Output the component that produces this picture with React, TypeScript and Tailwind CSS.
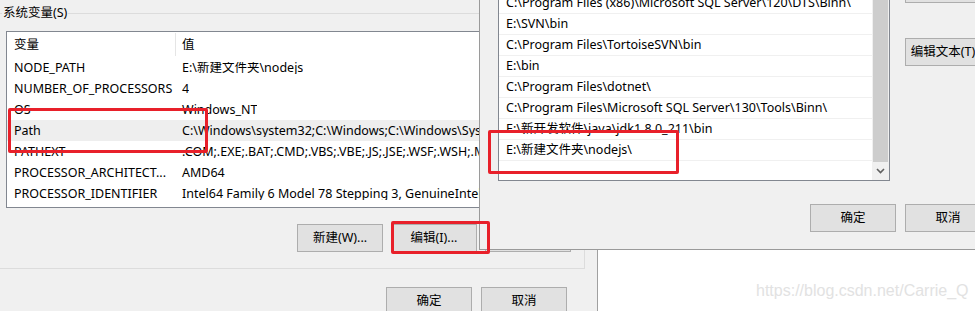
const SYS_VARS = [
  { name: "NODE_PATH", value: "E:\\新建文件夹\\nodejs" },
  { name: "NUMBER_OF_PROCESSORS", value: "4" },
  { name: "OS", value: "Windows_NT" },
  {
    name: "Path",
    value: "C:\\Windows\\system32;C:\\Windows;C:\\Windows\\System32\\Wbem;C:\\Windows\\System32\\WindowsPowerShell\\v1.0\\",
    selected: true,
  },
  { name: "PATHEXT", value: ".COM;.EXE;.BAT;.CMD;.VBS;.VBE;.JS;.JSE;.WSF;.WSH;.MSC" },
  { name: "PROCESSOR_ARCHITECT...", value: "AMD64" },
  { name: "PROCESSOR_IDENTIFIER", value: "Intel64 Family 6 Model 78 Stepping 3, GenuineIntel" },
];

const PATH_ENTRIES = [
  "C:\\Program Files (x86)\\Microsoft SQL Server\\120\\DTS\\Binn\\",
  "E:\\SVN\\bin",
  "C:\\Program Files\\TortoiseSVN\\bin",
  "E:\\bin",
  "C:\\Program Files\\dotnet\\",
  "C:\\Program Files\\Microsoft SQL Server\\130\\Tools\\Binn\\",
  "E:\\新开发软件\\java\\jdk1.8.0_211\\bin",
  "E:\\新建文件夹\\nodejs\\",
  "",
];

function WinButton({ children, className = "" }: { children: React.ReactNode; className?: string }) {
  return (
    <button
      className={`flex h-[28px] w-[86px] shrink-0 items-center justify-center whitespace-nowrap border border-[#adadad] bg-[#e1e1e1] pt-[1px] text-[12.5px] text-black ${className}`}
    >
      {children}
    </button>
  );
}

export default function App() {
  return (
    <div className="relative h-[311px] w-[975px] overflow-hidden bg-white font-['Noto_Sans','Noto_Sans_CJK_SC',sans-serif] text-[12.5px] leading-none text-black">
      {/* Environment variables window (behind) */}
      <div className="absolute left-0 top-0 h-[330px] w-[598px] border-r border-[#a0a0a0] bg-[#f0f0f0]">
        <div className="-ml-[4px] w-[589px] pt-[5px]">
          {/* group label */}
          <div className="flex h-[16px] items-center">
            <div className="w-[6px] border-t border-[#dcdcdc]" />
            <span className="px-[1px] pt-[1px]">系统变量(S)</span>
            <div className="flex-1 border-t border-[#dcdcdc]" />
          </div>

          <div className="border-x border-b border-[#dcdcdc] pb-[16px] pl-[9px] pr-[13px] pt-[10px]">
            {/* list view */}
            <div className="h-[177px] overflow-hidden border border-[#828790] bg-white">
              <div className="flex h-[25px] items-center">
                <div className="w-[168px] pl-[7px] pt-[1px]">变量</div>
                <div className="my-[1px] w-[1px] self-stretch bg-[#e5e5e5]" />
                <div className="pl-[6px] pt-[1px]">值</div>
              </div>
              {SYS_VARS.map((v) => (
                <div key={v.name} className={`flex h-[21px] items-center pt-[1px] ${v.selected ? "bg-[#eeeeee]" : ""}`}>
                  <div className="w-[169px] shrink-0 whitespace-nowrap pl-[7px]">{v.name}</div>
                  <div className="overflow-hidden whitespace-nowrap pl-[6px]">{v.value}</div>
                </div>
              ))}
            </div>

            <div className="mt-[16px] flex justify-end gap-[8px]">
              <WinButton>新建(W)...</WinButton>
              <WinButton>编辑(I)...</WinButton>
              <WinButton>删除(L)</WinButton>
            </div>
          </div>
        </div>

        <div className="mt-[18px] flex justify-end gap-[9px] pr-[30px]">
          <WinButton>确定</WinButton>
          <WinButton>取消</WinButton>
        </div>
      </div>

      {/* Edit environment variable window (front) */}
      <div className="absolute left-[479px] top-[-40px] flex h-[290px] w-[521px] flex-col border-b border-l border-[#9a9a9a] bg-[#f0f0f0]">
        <div className="flex items-start pl-[18px]">
          <div className="mt-[32px] flex h-[189px] w-[392px] overflow-hidden border border-[#828790] bg-white">
            <div className="flex-1">
              {PATH_ENTRIES.map((p, i) => (
                <div key={i} className="flex h-[21px] items-center whitespace-nowrap border-b border-[#f0f0f0] pl-[7px] pt-[1px]">
                  {p}
                </div>
              ))}
            </div>
            <div className="flex w-[17px] flex-col bg-[#f0f0f0]">
              <div className="mx-[1px] h-[169px] bg-[#cdcdcd]" />
              <div className="flex flex-1 items-center justify-center">
                <svg width="9" height="6" viewBox="0 0 9 6">
                  <path d="M1 1 L4.5 4.5 L8 1" fill="none" stroke="#606060" strokeWidth="1.6" />
                </svg>
              </div>
            </div>
          </div>

          <div className="ml-[15px] mt-[15px] flex flex-col">
            <WinButton>下移(O)</WinButton>
            <WinButton className="mt-[35px]">编辑文本(T)...</WinButton>
          </div>
        </div>

        <div className="mt-[23px] flex gap-[9px] pl-[330px]">
          <WinButton>确定</WinButton>
          <WinButton>取消</WinButton>
        </div>
      </div>

      {/* watermark */}
      <div className="absolute left-[756px] top-[283px] font-['Liberation_Sans',sans-serif] text-[16px] leading-none text-[#e2e2e2]">
        https://blog.csdn.net/Carrie_Q
      </div>

      {/* red annotation boxes */}
      <div className="pointer-events-none absolute left-[8px] top-[108px] h-[45px] w-[200px] rounded-[2px] border-[3px] border-[#e8202a]" />
      <div className="pointer-events-none absolute left-[488px] top-[130px] h-[44px] w-[191px] rounded-[2px] border-[3px] border-[#e8202a]" />
      <div className="pointer-events-none absolute left-[391px] top-[221px] h-[33px] w-[99px] rounded-[2px] border-[3px] border-[#e8202a]" />
    </div>
  );
}
